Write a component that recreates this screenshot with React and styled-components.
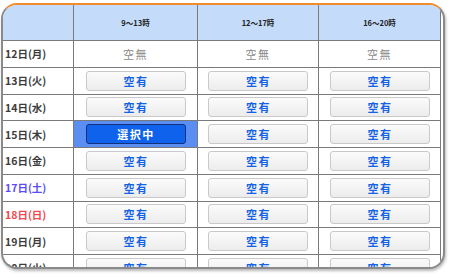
import React from "react";
import styled, { createGlobalStyle } from "styled-components";

const GlobalStyle = createGlobalStyle`
  html, body { margin: 0; padding: 0; background: #ffffff; }
  body { font-family: "Noto Sans CJK JP", "Noto Sans", sans-serif; }
`;

const Page = styled.div`
  width: 450px;
  height: 280px;
  padding: 3px 0 0 1px;
  box-sizing: border-box;
  overflow: hidden;
`;

const Frame = styled.div`
  width: 444px;
  height: 266px;
  box-sizing: border-box;
  border: 2px solid #8a8a8a;
  border-top-color: #f08c2c;
  border-radius: 16px;
  padding-right: 2px;
  overflow: hidden;
  background: #fff;
  box-shadow: 1px 2px 3px rgba(0, 0, 0, 0.28);
`;

const Table = styled.div`
  display: grid;
  grid-template-columns: 71px 124px 121px 122px;
  grid-template-rows: 36px;
  grid-auto-rows: 26.75px;
`;

const Cell = styled.div`
  box-sizing: border-box;
  border-right: 1px solid #7a7a7a;
  border-bottom: 1px solid #7a7a7a;
  display: flex;
  align-items: center;
`;

const HeadCell = styled(Cell)`
  background: #c5dbfa;
  justify-content: center;
  font-size: 7.5px;
  font-weight: 700;
  color: #222;
  padding-bottom: 1px;
`;

const toneColor = { normal: "#3c3c3c", sat: "#5a4cf5", sun: "#f5474f" };

const DateCell = styled(Cell)`
  padding-left: 2px;
  font-size: 10.5px;
  font-weight: 700;
  color: ${(p) => toneColor[p.$tone]};
  white-space: nowrap;
`;

const SlotCell = styled(Cell)`
  justify-content: center;
  background: ${(p) => (p.$selected ? "#5b8ef2" : "#ffffff")};
`;

const SlotButton = styled.div`
  width: 100px;
  height: 20px;
  box-sizing: border-box;
  border-radius: 3px;
  display: flex;
  align-items: center;
  justify-content: center;
  font-size: 11px;
  font-weight: 700;
  letter-spacing: 1.5px;
  padding-left: 1px;
  border: ${(p) => (p.$selected ? "1.5px solid #13307a" : "1px solid #c9c9c9")};
  background: ${(p) =>
    p.$selected
      ? "#0f62ec"
      : "linear-gradient(#fbfbfb, #ececec)"};
  color: ${(p) => (p.$selected ? "#ffffff" : "#1463e6")};
`;

const EmptyText = styled.span`
  font-size: 11px;
  color: #8a8a8a;
  letter-spacing: 1.5px;
`;

const slots = ["9～13時", "12～17時", "16～20時"];

const days = [
  { d: "12日(月)", tone: "normal", empty: true },
  { d: "13日(火)", tone: "normal" },
  { d: "14日(水)", tone: "normal" },
  { d: "15日(木)", tone: "normal", selected: 0 },
  { d: "16日(金)", tone: "normal" },
  { d: "17日(土)", tone: "sat" },
  { d: "18日(日)", tone: "sun" },
  { d: "19日(月)", tone: "normal" },
  { d: "20日(火)", tone: "normal" },
];

export default function App() {
  return (
    <>
      <GlobalStyle />
      <Page>
        <Frame>
          <Table>
            <HeadCell />
            {slots.map((s) => (
              <HeadCell key={s}>{s}</HeadCell>
            ))}
            {days.map((row) => (
              <React.Fragment key={row.d}>
                <DateCell $tone={row.tone}>{row.d}</DateCell>
                {slots.map((s, i) => {
                  const sel = row.selected === i;
                  return (
                    <SlotCell key={s} $selected={sel}>
                      {row.empty ? (
                        <EmptyText>空無</EmptyText>
                      ) : (
                        <SlotButton $selected={sel}>
                          {sel ? "選択中" : "空有"}
                        </SlotButton>
                      )}
                    </SlotCell>
                  );
                })}
              </React.Fragment>
            ))}
          </Table>
        </Frame>
      </Page>
    </>
  );
}
